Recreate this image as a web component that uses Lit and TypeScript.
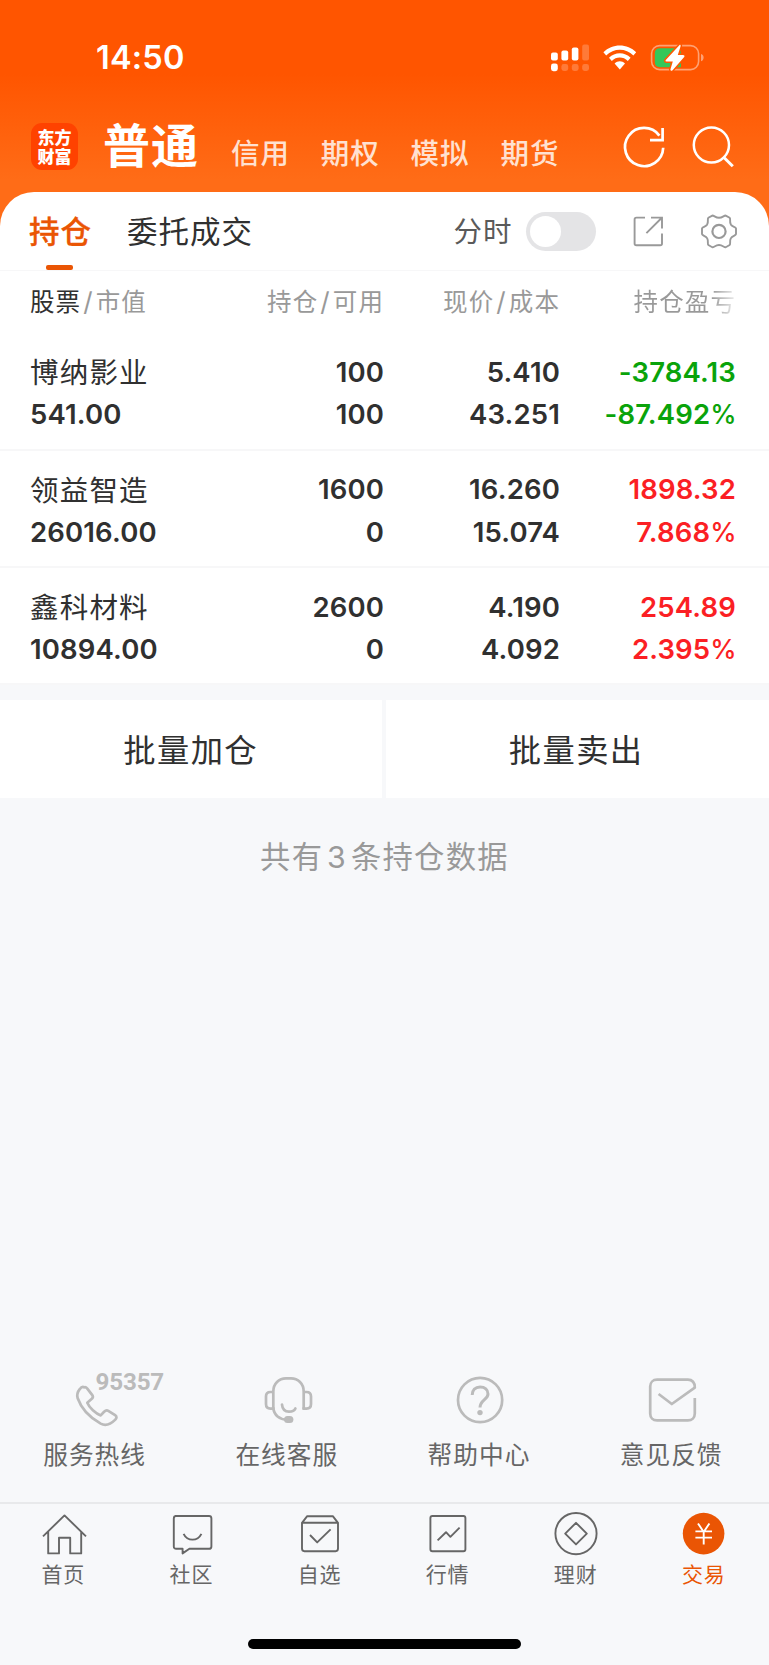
import { LitElement, html, svg, css } from "lit";
import { customElement } from "lit/decorators.js";

interface Holding {
  name: string;
  value: string;
  held: string;
  usable: string;
  price: string;
  cost: string;
  profit: string;
  rate: string;
  dir: "up" | "down";
}

const HOLDINGS: Holding[] = [
  { name: "博纳影业", value: "541.00", held: "100", usable: "100", price: "5.410", cost: "43.251", profit: "-3784.13", rate: "-87.492", dir: "down" },
  { name: "领益智造", value: "26016.00", held: "1600", usable: "0", price: "16.260", cost: "15.074", profit: "1898.32", rate: "7.868", dir: "up" },
  { name: "鑫科材料", value: "10894.00", held: "2600", usable: "0", price: "4.190", cost: "4.092", profit: "254.89", rate: "2.395", dir: "up" },
];

// Six-lobed outline: flat lobes joined by shallow concave arcs.
const gear =
  "M11.2 1.6 C13 1.2 14.2 3.8 18 3.8 C21.8 3.8 23 1.2 24.8 1.6 L28.6 3.8 C30 5 28.2 7.4 29.8 10.4 C31.4 13 34.6 12.6 35 14.4 L35 20 C34.6 22 31.4 21.6 29.8 24.4 C28.2 27.4 30 29.8 28.6 31 L24.8 33.2 C23 33.6 21.8 31 18 31 C14.2 31 13 33.6 11.2 33.2 L7.4 31 C6 29.8 7.8 27.4 6.2 24.4 C4.6 21.6 1.4 22 1 20 L1 14.4 C1.4 12.6 4.6 13 6.2 10.4 C7.8 7.4 6 5 7.4 3.8 Z";

const SERVICES = [
  {
    label: "服务热线",
    tag: "95357",
    icon: svg`<path d="M8.5 10.2 C6.5 8.8 5 10.6 4 12 C1.8 14.8 .8 17.4 2 21 C5.8 32 14 40.2 25 46.4 C31 49.6 36 46 39.6 42.4 C41 41 41.4 39.4 39.4 38 L32.6 33.6 C30.6 32.4 29.4 33.6 28.4 34.6 L25 38.2 C20 36.4 13.6 30.6 11.6 25.6 L16.4 21.4 C17.6 20.2 17.4 19 16.4 17.6 L11.6 11.4 C10.6 10.2 9.6 9.6 8.5 10.2Z" transform="translate(3.7 2.2)"/>`,
  },
  {
    label: "在线客服",
    tag: "",
    icon: svg`<path d="M9.3 34V16.5C9.3 8.5 15 3.4 22 3.4H27C34 3.4 39.7 8.5 39.7 16.5V34"/><path d="M9.3 17H6.5C3.5 17 2 18.5 2 21.5V29C2 32 3.5 33.6 6.5 33.6H9.3M39.7 17H42.5C45.5 17 47 18.5 47 21.5V29C47 32 45.5 33.6 42.5 33.6H38.4"/><path d="M9.3 33C10 40 15.5 44.6 23 44.6M18 29.6C18.4 34 21.2 36.6 25 36.6C28 36.6 30.6 35.4 31.4 33.4" stroke-linecap="round"/><rect x="20" y="41" width="9.4" height="7" rx="3.5" fill="#bbb" stroke="none"/>`,
  },
  {
    label: "帮助中心",
    tag: "",
    icon: svg`<circle cx="24.1" cy="25" r="22.1"/><path d="M16.2 20C16.2 15 19.4 11.9 24.1 11.9C28.8 11.9 32 14.7 32 18.9C32 24.6 24 25 24 32.6" stroke-width="3"/><circle cx="24" cy="37.6" r="2.7" fill="#bbb" stroke="none"/>`,
  },
  {
    label: "意见反馈",
    tag: "",
    icon: svg`<path d="M46.8 23V38.5C46.8 42.5 43.9 45.4 39.9 45.4H9C5 45.4 2.2 42.5 2.2 38.5V11.5C2.2 7.5 5 4.7 9 4.7H39.9C44.2 4.7 47 7.5 46.8 12.6L23.8 29L10.6 19"/>`,
  },
];

const TABS = [
  { label: "首页", icon: svg`<path d="M1 24.4L22.5 3.4L44 24.4M6.2 19.8V41.4H17V25.8H28.2V41.4H39.2V19.8"/>` },
  { label: "社区", icon: svg`<path d="M5.2 4H39C40.6 4 41.4 4.8 41.4 6.4V34.4C41.4 36 40.6 36.8 39 36.8H19.4L12.6 41.4V36.8H6.2C4.6 36.8 3.8 36 3.8 34.4V6.4C3.8 4.8 4.6 4 6.2 4Z"/><path d="M13.6 21.8C17.4 29.6 27.6 29.6 31.4 21.8"/>` },
  { label: "自选", icon: svg`<path d="M4 10.8L9.2 4.2H34.8L40 10.8M4 10.8H40V36.6C40 38.4 39.2 39.2 37.6 39.2H6.4C4.8 39.2 4 38.4 4 36.6Z"/><path d="M12 23L19.2 30.4L32.6 17.4"/>` },
  { label: "行情", icon: svg`<rect x="4.4" y="4" width="35" height="35.2" rx="2"/><path d="M11.6 28.4L20 20.2L24.4 24.8L33.6 15.6"/>` },
  { label: "理财", icon: svg`<circle cx="22" cy="21.6" r="20.6"/><path d="M22 10.8L32.8 21.6L22 32.4L11.2 21.6Z"/>` },
  { label: "交易", active: true, icon: svg`<circle cx="21.6" cy="21.6" r="20.8" fill="#ea5504" stroke="none"/><path d="M16 11.4L21.7 20L27.4 11.4M21.7 19.4V32.4M13.4 19.4H30M13.4 25.6H30" stroke="#fff"/>` },
];

@customElement("app-root")
export class AppRoot extends LitElement {
  static styles = css`
    :host {
      display: flex;
      flex-direction: column;
      width: 769px;
      height: 1665px;
      overflow: hidden;
      background: #f7f8fa;
      color: #303030;
      font-family: Inter, "Noto Sans CJK SC", sans-serif;
      white-space: nowrap;
    }
    * { box-sizing: border-box; }
    svg { display: block; fill: none; flex: none; overflow: visible; }
    .top {
      height: 230px;
      flex: none;
      background: linear-gradient(#ff5500 0, #ff5500 74px, #ff6c17 180px, #ff6c17 100%);
      color: #fff;
    }
    .status { display: flex; align-items: center; height: 115px; padding-left: 96px; }
    .time { width: 455px; font-size: 32.5px; font-weight: 600; line-height: 40px; letter-spacing: 0.2px; }
    .nav { display: flex; align-items: center; height: 62px; padding-left: 31px; }
    .logo {
      width: 47px; height: 47px; border-radius: 11px; background: #ff4200;
      font: 900 17px/19.5px "Noto Sans CJK SC", sans-serif;
      text-align: center; padding-top: 3.5px; margin-top: 1px;
    }
    .main { font-size: 47px; font-weight: 700; line-height: 60px; letter-spacing: 1px; margin-left: 25px; margin-top: -1px; width: 128px; }
    .sub { font-size: 28.5px; font-weight: 500; line-height: 40px; letter-spacing: 1px; width: 89.8px; color: #ffe1d1; margin-top: 15px; }
    .refresh { margin-left: 34.2px; margin-top: 1px; }
    .search { margin-left: 26.6px; margin-top: 1px; }
    .card { background: #fff; margin-top: -38.5px; border-radius: 34px 34px 0 0; flex: none; }
    .tabs { display: flex; align-items: center; height: 79px; padding: 2px 0 0 29px; border-bottom: 1.5px solid #f7f7f8; }
    .tab { font-size: 30.5px; line-height: 76px; letter-spacing: 1px; width: 98px; }
    .tab.on { color: #ea5504; font-weight: 500; position: relative; -webkit-text-stroke: 0.3px #ea5504; }
    .tab.on::after {
      content: ""; position: absolute; left: 17px; bottom: -0.5px; width: 27px; height: 5.5px;
      border-radius: 2px; background: #ea5504;
    }
    .tab.wide { width: 326.4px; }
    .minute { font-size: 28.5px; line-height: 76px; letter-spacing: 1px; color: #5a5a5a; width: 72.6px; }
    .switch { width: 70px; height: 39px; border-radius: 20px; background: #e4e4e6; padding: 4px; }
    .knob { width: 31px; height: 31px; border-radius: 50%; background: #fff; }
    .share { margin-left: 37px; }
    .gear { margin-left: 37px; }
    .row { display: grid; grid-template-columns: 182px 172px 176px 176px; padding-left: 30px; }
    .row > :not(:first-child) { text-align: right; }
    .head { height: 63px; line-height: 62px; font-size: 24.5px; letter-spacing: 1.1px; color: #999; }
    .head b { font-weight: 400; color: #303030; }
    .head i { font-style: normal; margin: 0 2px 0 2px; font-size: 26px; }
    .fade { background: linear-gradient(90deg, #999 76%, #eee 100%); background-clip: text; -webkit-background-clip: text; color: transparent; }
    .item { height: 117.3px; padding-top: 18.8px; border-bottom: 2px solid #f7f7f8; }
    .item div { font-size: 27.5px; font-weight: 600; line-height: 42.3px; letter-spacing: 0.15px; }
    .item section:not(:first-child) { margin-top: -1.2px; }
    .item .name { font-size: 28.5px; font-weight: 400; letter-spacing: 1.2px; margin-bottom: -1.2px; }
    .pct { font-weight: 500; font-size: 26.5px; letter-spacing: -0.6px; }
    .up { color: #fb1f24; }
    .down { color: #0aa30a; }
    .batch { display: grid; grid-template-columns: 382.3px 1fr; gap: 4px; margin-top: 14.6px; flex: none; height: 98px; }
    .batch button {
      border: 0; padding: 0 1px 2px 0; background: #fff; font: 400 32.3px/96px "Noto Sans CJK SC", sans-serif;
      letter-spacing: 1.4px; color: #303030;
    }
    .batch button:last-child { padding-right: 3px; }
    .count { text-align: center; font-size: 30.3px; line-height: 60px; margin-top: 29px; color: #999; letter-spacing: 1.3px; }
    .count i { font-style: normal; margin: 0 4px 0 3.6px; }
    .services { display: grid; grid-template-columns: repeat(4, 192.2px); margin-top: auto; height: 127px; flex: none; }
    .service { display: flex; flex-direction: column; align-items: center; }
    .service svg { stroke: #bbb; stroke-width: 2.7; stroke-linejoin: round; }
    .ico { position: relative; }
    .tag {
      position: absolute; left: 24px; top: -7.5px; font: 700 24.2px/28px Roboto, sans-serif;
      color: #bbb; letter-spacing: -0.2px;
    }
    .service span { font-size: 24.7px; line-height: 36px; margin-top: 12px; letter-spacing: 1px; color: #666; padding-right: 3px; }
    .bar { display: grid; grid-template-columns: repeat(6, 128.1px); height: 163px; flex: none; border-top: 2px solid #e8e9eb; position: relative; }
    .dock { display: flex; flex-direction: column; align-items: center; padding-top: 8px; color: #666; }
    .dock svg { stroke: #666; stroke-width: 1.9; stroke-linejoin: round; }
    .dock span { font-size: 21px; line-height: 30px; letter-spacing: 0.8px; margin-top: 5px; padding-right: 1.5px; }
    .dock.on { color: #ea5504; }
    .indicator { position: absolute; left: 248px; top: 135px; width: 273px; height: 10px; border-radius: 5px; background: #000; }
  `;

  private row(h: Holding) {
    return html`<div class="row item">
      <section><div class="name">${h.name}</div><div>${h.value}</div></section>
      <section><div>${h.held}</div><div>${h.usable}</div></section>
      <section><div>${h.price}</div><div>${h.cost}</div></section>
      <section class=${h.dir}><div>${h.profit}</div><div>${h.rate}<span class="pct">%</span></div></section>
    </div>`;
  }

  render() {
    return html`
      <header class="top">
        <div class="status">
          <span class="time">14:50</span>
          <svg width="154" height="28" viewBox="0 0 154 28">
            <g fill="#fff">
              <rect x="0" y="8.6" width="6.8" height="8" rx="2"/><rect x="10.4" y="6.6" width="6.8" height="10" rx="2"/>
              <rect x="20.8" y="3.4" width="6.6" height="13.2" rx="2"/><rect x="31.2" y=".4" width="6.8" height="16.2" rx="2" opacity=".22"/>
              <rect x="0" y="19.6" width="6.8" height="7.6" rx="2.4"/>
              <g opacity=".22"><rect x="10.4" y="20" width="6.8" height="7" rx="2.4"/><rect x="20.8" y="20" width="6.8" height="7" rx="2.4"/><rect x="31.2" y="20" width="6.8" height="7" rx="2.4"/></g>
              <path d="M52.4 8.2C61.2-.8 76.4-.8 85.2 8.2L82.4 11.4C75 3.8 62.6 3.8 55.2 11.4Z"/>
              <path d="M58 13.8C63.8 7.8 73.8 7.8 79.6 13.8L76.8 16.9C72.4 12.4 65.2 12.4 60.8 16.9Z"/>
              <path d="M63.6 19.4C66.6 16.6 71 16.6 74 19.4L68.8 25.4Z"/>
            </g>
            <rect x="100.6" y="1.6" width="47" height="24" rx="8" stroke="#fff" stroke-opacity=".45" stroke-width="1.6"/>
            <path d="M150 10Q152.6 10.6 152.6 13.6Q152.6 16.6 150 17.2Z" fill="#fff" fill-opacity=".45"/>
            <path d="M109 4.2H130V23.2H109Q103.8 23.2 103.8 18V9.4Q103.8 4.2 109 4.2Z" fill="#34c759"/>
            <path d="M128.8.8L114.6 16.2Q114 17.6 115.6 17.6H121.8L119.4 25.4Q119.6 27.8 121.6 26.2L133.4 12.8Q134 11 132 11H126.8L129.6 2.2Q129.8.4 128.8.8Z" fill="#fff" stroke="#ff5800" stroke-width="3" paint-order="stroke"/>
          </svg>
        </div>
        <nav class="nav">
          <div class="logo">东方<br>财富</div>
          <span class="main">普通</span>
          <span class="sub">信用</span><span class="sub">期权</span><span class="sub">模拟</span><span class="sub">期货</span>
          <svg class="refresh" width="41" height="42" viewBox="0 0 41 42" stroke="#fff" stroke-width="2.7">
            <path d="M39.2 21.8A19.1 19.1 0 1 1 35.4 9.6M38.6 2V14.1H26"/>
          </svg>
          <svg class="search" width="42" height="42" viewBox="0 0 42 42" stroke="#fff" stroke-width="2.5">
            <circle cx="19.4" cy="19" r="17.6"/><path d="M31.4 31L40.8 40.2" stroke-width="3"/>
          </svg>
        </nav>
      </header>
      <main class="card">
        <div class="tabs">
          <span class="tab on">持仓</span><span class="tab wide">委托成交</span>
          <span class="minute">分时</span>
          <div class="switch"><div class="knob"></div></div>
          <svg class="share" width="31" height="31" viewBox="0 0 31 31" stroke="#999" stroke-width="1.9">
            <path d="M12 1.6H3.4Q1.6 1.6 1.6 3.4V27.4Q1.6 29.2 3.4 29.2H27.2Q29 29.2 29 27.4V17.4M18 1.6H29V12.4M28.6 2L13.4 17.2"/>
          </svg>
          <svg class="gear" width="36" height="35" viewBox="0 0 36 35" stroke="#999" stroke-width="1.9">
            <path d=${gear}/><circle cx="18" cy="17.4" r="6.6" stroke-width="2.2"/>
          </svg>
        </div>
        <div class="row head">
          <span><b>股票</b><i>/</i>市值</span><span>持仓<i>/</i>可用</span><span>现价<i>/</i>成本</span><span><span class="fade">持仓盈亏</span></span>
        </div>
        ${HOLDINGS.map((h) => this.row(h))}
      </main>
      <div class="batch"><button>批量加仓</button><button>批量卖出</button></div>
      <div class="count">共有<i>3</i>条持仓数据</div>
      <div class="services">
        ${SERVICES.map((s) => html`<div class="service">
          <div class="ico"><svg width="49" height="50" viewBox="0 0 49 50">${s.icon}</svg>${s.tag ? html`<b class="tag">${s.tag}</b>` : ""}</div>
          <span>${s.label}</span>
        </div>`)}
      </div>
      <footer class="bar">
        ${TABS.map((t) => html`<div class="dock ${t.active ? "on" : ""}">
          <svg width="45" height="43" viewBox="0 0 45 43">${t.icon}</svg><span>${t.label}</span>
        </div>`)}
        <div class="indicator"></div>
      </footer>
    `;
  }
}
